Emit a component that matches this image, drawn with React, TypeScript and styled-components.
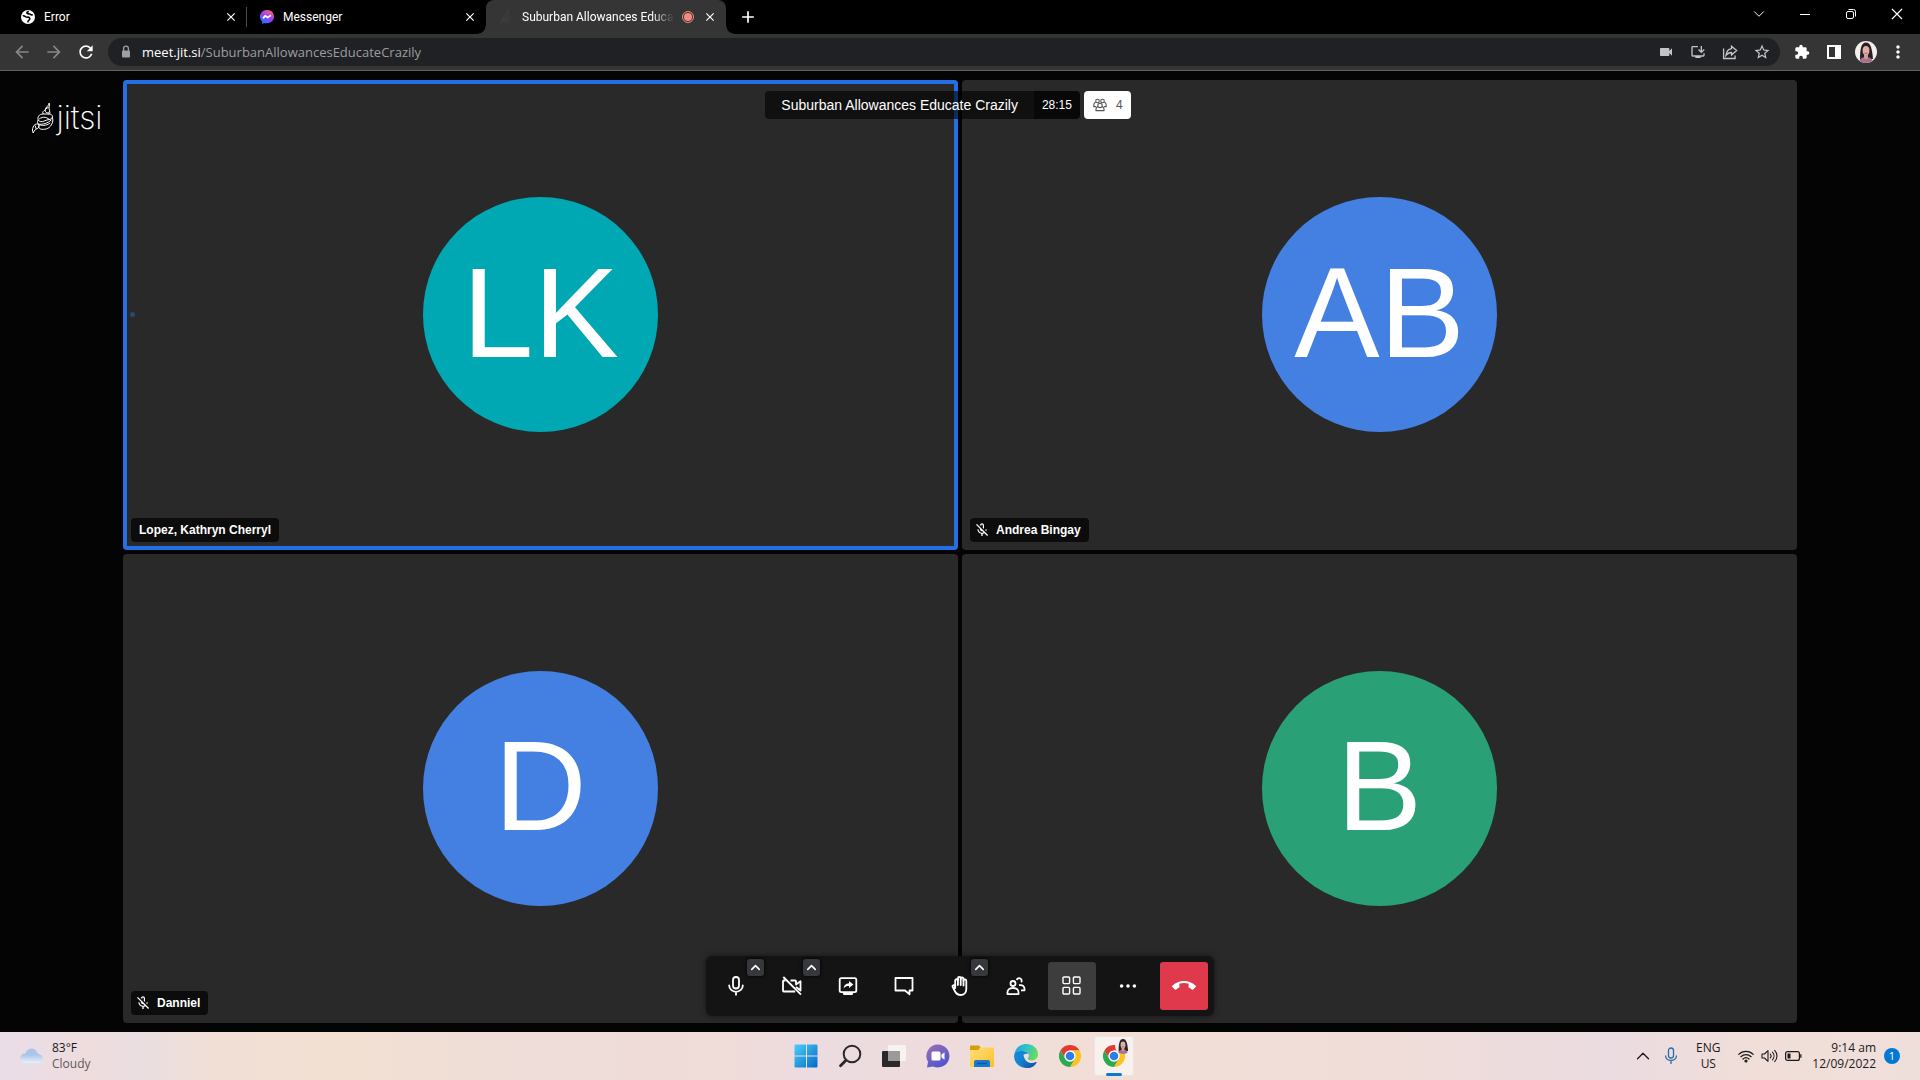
import React from 'react';
import styled, { createGlobalStyle, css } from 'styled-components';
import {
  MdAdd,
  MdArrowBack,
  MdArrowForward,
  MdCallEnd,
  MdClose,
  MdExtension,
  MdMoreVert,
  MdOutlineInstallDesktop,
  MdOutlineMicOff,
  MdRefresh,
  MdStarBorder,
  MdVideocam,
} from 'react-icons/md';
import { ChevronDown, ChevronUp } from 'lucide-react';

const systemFont = '"Open Sans", "Noto Sans", sans-serif';
const tabFont = 'Roboto, "Noto Sans", sans-serif';
const meetFont = '"Liberation Sans", Arial, sans-serif';

const GlobalStyle = createGlobalStyle`
  *, *::before, *::after { box-sizing: border-box; }
  body { margin: 0; background: #040404; }
  button, input { font: inherit; color: inherit; }
  button { padding: 0; border: 0; background: none; }
  svg { display: block; flex: none; }
  h1, h2, p { margin: 0; font: inherit; }
`;

const Screen = styled.div`
  display: flex;
  flex-direction: column;
  min-height: 100vh;
  font: 12px/16px ${systemFont};
  color: #fff;
`;

/* ---------- browser window ---------- */

const TabStrip = styled.header`
  display: flex;
  height: 34px;
  padding-left: 8px;
  background: #000;
`;

const Tab = styled.div<{ $active?: boolean; $divider?: boolean }>`
  position: relative;
  display: flex;
  align-items: center;
  gap: 8px;
  width: ${(p) => (p.$active ? '240px' : '239px')};
  padding: 0 8px 0 12px;
  border-radius: 8px 8px 0 0;
  font-family: ${tabFont};
  ${(p) =>
    p.$divider &&
    css`
      &::after {
        content: '';
        position: absolute;
        right: 0;
        width: 1px;
        height: 20px;
        background: #4a4a4a;
      }
    `}
  ${(p) =>
    p.$active &&
    css`
      background: #353535;
      &::before,
      &::after {
        content: '';
        position: absolute;
        bottom: 0;
        width: 8px;
        height: 8px;
      }
      &::before {
        right: 100%;
        background: radial-gradient(circle at 0 0, transparent 7px, #353535 8px);
      }
      &::after {
        left: 100%;
        background: radial-gradient(circle at 100% 0, transparent 7px, #353535 8px);
      }
    `}
`;

const TabTitle = styled.span<{ $fade?: boolean }>`
  flex: 1;
  min-width: 0;
  overflow: hidden;
  white-space: nowrap;
  ${(p) =>
    p.$fade &&
    css`
      mask-image: linear-gradient(90deg, #000 85%, transparent);
    `}
`;

const SmallButton = styled.button`
  display: grid;
  place-items: center;
  width: 16px;
  height: 16px;
`;

const NewTab = styled.button`
  display: grid;
  place-items: center;
  width: 28px;
  margin-left: 8px;
`;

const WindowControls = styled.div`
  display: flex;
  margin-left: auto;
`;

const WindowButton = styled.button`
  display: grid;
  place-items: center;
  width: 46px;
  height: 28px;
`;

const AddressBar = styled.nav`
  display: flex;
  align-items: center;
  gap: 4px;
  height: 37px;
  padding: 0 8px;
  background: #353535;
  border-bottom: 1px solid #616362;
`;

const IconButton = styled.button<{ $tone?: string }>`
  display: grid;
  place-items: center;
  width: 28px;
  height: 28px;
  color: ${(p) => p.$tone ?? '#fff'};
`;

const Omnibox = styled.form`
  display: flex;
  align-items: center;
  gap: 4px;
  flex: 1;
  height: 28px;
  margin: 0 4px;
  padding: 0 4px 0 10px;
  border-radius: 14px;
  background: #202124;
  color: #c2c4c6;
`;

const Address = styled.label`
  display: flex;
  flex: 1;
  padding-left: 4px;
  font-size: 13px;
  line-height: 20px;
  color: #fff;
`;

const AddressInput = styled.input`
  flex: 1;
  min-width: 0;
  padding: 0;
  border: 0;
  outline: 0;
  background: none;
  color: #9b9d9f;
`;

/* ---------- meeting ---------- */

const Stage = styled.main`
  position: relative;
  display: flex;
  flex: 1;
  padding: 9px 123px;
  background: #040404;
  font-family: ${meetFont};
`;

const Watermark = styled.a`
  position: absolute;
  top: 29px;
  left: 32px;
  display: flex;
  align-items: center;
  gap: 2px;
  color: #fff;
  text-decoration: none;
  font: 200 32px/36px Inter, ${meetFont};
`;

const TileGrid = styled.div`
  display: grid;
  flex: 1;
  grid-template: 1fr 1fr / 1fr 1fr;
  gap: 4px;
`;

const Tile = styled.section<{ $speaking?: boolean }>`
  position: relative;
  display: grid;
  place-items: center;
  border-radius: 4px;
  background: #292929;
  ${(p) =>
    p.$speaking &&
    css`
      box-shadow: inset 0 0 0 4px #246fe5;
    `}
`;

const Avatar = styled.div<{ $color: string }>`
  display: grid;
  place-items: center;
  height: 50%;
  aspect-ratio: 1;
  padding-bottom: 4px;
  border-radius: 50%;
  background: ${(p) => p.$color};
  font-size: 128px;
  line-height: 1;
`;

const NameTag = styled.h2<{ $muted: boolean }>`
  position: absolute;
  left: 8px;
  bottom: 8px;
  display: flex;
  align-items: center;
  gap: 6px;
  height: 24px;
  padding: 0 8px 0 ${(p) => (p.$muted ? '4px' : '8px')};
  border-radius: 4px;
  background: rgba(0, 0, 0, 0.7);
  font-size: 12px;
  font-weight: 700;
`;

const AudioDot = styled.span`
  position: absolute;
  left: 7px;
  width: 5px;
  height: 5px;
  border-radius: 50%;
  background: #2a486f;
`;

const MeetingInfo = styled.div`
  position: absolute;
  top: 20px;
  left: 0;
  right: 0;
  display: flex;
  justify-content: center;
  padding-right: 24px;
  line-height: 28px;
`;

const Subject = styled.h1`
  padding: 0 16px;
  border-radius: 4px 0 0 4px;
  background: rgba(0, 0, 0, 0.6);
  font-size: 14px;
`;

const Timer = styled.time`
  padding: 0 8px;
  border-radius: 0 4px 4px 0;
  background: rgba(0, 0, 0, 0.8);
  font-size: 12px;
`;

const Count = styled.button`
  display: flex;
  align-items: center;
  gap: 8px;
  height: 28px;
  margin-left: 4px;
  padding: 0 8px;
  border-radius: 4px;
  background: #fff;
  color: #555;
  font-size: 12px;
`;

const Toolbox = styled.div`
  position: absolute;
  left: 50%;
  bottom: 16px;
  display: flex;
  gap: 8px;
  padding: 6px;
  border-radius: 6px;
  background: #141414;
  box-shadow: 0 0 6px rgba(0, 0, 0, 0.5);
  transform: translateX(-50%);
`;

const ToolSlot = styled.div`
  position: relative;
`;

const ToolButton = styled.button<{ $fill?: string }>`
  display: grid;
  place-items: center;
  width: 48px;
  height: 48px;
  border-radius: 3px;
  background: ${(p) => p.$fill ?? 'transparent'};
`;

const ToolOptions = styled.button`
  position: absolute;
  top: -3px;
  right: -4px;
  display: grid;
  place-items: center;
  width: 17px;
  height: 17px;
  border-radius: 3px;
  background: #36383c;
  box-shadow: 0 0 4px #000;
`;

/* ---------- desktop taskbar ---------- */

const Taskbar = styled.footer`
  display: grid;
  grid-template-columns: 1fr auto 1fr;
  align-items: center;
  height: 48px;
  background: linear-gradient(90deg, #e9dde8 0%, #efdddd 5%, #e9dee1 7%, #f1dfd6 11%, #f2e0d2 18%, #eeddd9 28%, #f0dcd8 38%, #ecdbe0 42%, #eedcdc 50%, #f1dfd6 58%, #f0ddd9 72%, #ebdce1 84%, #f1ded8 92%, #efdfdb 100%);
  color: #1d1a1b;
`;

const Weather = styled.button`
  display: flex;
  align-items: center;
  gap: 8px;
  justify-self: start;
  padding-left: 20px;
  text-align: left;
`;

const Muted = styled.span`
  display: block;
  color: #5f595a;
`;

const Apps = styled.div`
  display: flex;
  gap: 4px;
`;

const AppButton = styled.button<{ $active?: boolean }>`
  position: relative;
  display: grid;
  place-items: center;
  width: 40px;
  height: 40px;
  border-radius: 4px;
  ${(p) =>
    p.$active &&
    css`
      background: #f8f1ed;
      box-shadow: inset 0 0 0 1px #eee4df;
      &::after {
        content: '';
        position: absolute;
        bottom: 0;
        width: 16px;
        height: 3px;
        border-radius: 2px;
        background: #0b78d4;
      }
    `}
`;

const AppBadge = styled.span`
  position: absolute;
  top: 2px;
  right: 3px;
`;

const Tray = styled.div`
  display: flex;
  align-items: center;
  justify-self: end;
  gap: 6px;
  padding-right: 20px;
`;

const TrayButton = styled.button`
  display: grid;
  place-items: center;
  width: 22px;
  height: 40px;
`;

const Language = styled.button`
  width: 40px;
  text-align: center;
`;

const Status = styled.button`
  display: flex;
  align-items: center;
  gap: 7px;
  height: 40px;
  padding: 0 4px;
`;

const Clock = styled.button`
  display: flex;
  flex-direction: column;
  align-items: flex-end;
`;

const Notice = styled.button`
  width: 16px;
  height: 16px;
  margin-left: 2px;
  border-radius: 50%;
  background: #0078d4;
  color: #fff;
  font-size: 11px;
  line-height: 16px;
`;

/* ---------- drawings ---------- */

const GlobeIcon = () => (
  <svg width="16" height="16" viewBox="0 0 16 16">
    <circle cx="8" cy="8" r="7" fill="#fff" />
    <path d="M2.800 6.800c2.400-.4 2.800 1.800 4.600 1.400 1.600-.3 2.600.6 2.400 1.800-.2 1.400-1.800 1-2 3.400M8.800 2.600c-1.400 0-2.600 1.200-1.400 2 1 .6 1.800-.2 2.800.6.8.8 1.600.8 2.600.6" fill="none" stroke="#000" strokeWidth="1.600" />
  </svg>
);

const MessengerIcon = () => (
  <svg width="16" height="16" viewBox="0 0 16 16">
    <defs>
      <linearGradient id="msg" x1="0.2" y1="1" x2="0.8" y2="0">
        <stop offset="0" stopColor="#0a84ff" />
        <stop offset="0.5" stopColor="#9a3bff" />
        <stop offset="1" stopColor="#ff6968" />
      </linearGradient>
    </defs>
    <path d="M8 1C4 1 1 3.900 1 7.600c0 2 .8 3.700 2.200 4.900V15l2-1.100c.9.3 1.800.4 2.800.4 4 0 7-2.900 7-6.700S12 1 8 1z" fill="url(#msg)" />
    <path d="M4 9.400 6.300 6.600 8.600 8.600 11.800 6.400" fill="none" stroke="#fff" strokeWidth="1.700" strokeLinejoin="round" />
  </svg>
);

const JitsiMark = ({ size, tone }: { size: number; tone: string }) => (
  <svg width={size * 0.7} height={size} viewBox="0 0 22 32" fill="none" stroke={tone} strokeWidth="1" strokeLinejoin="round">
    <path d="M17 1c0 3-4 4-4 7 0 2 1 3 3 3 1-1 2-2 1-4-1-1 1-3 0-6zM13.500 7l3-2" />
    <path d="M13 8c-2 1-3 2-2 4l6 0c1-1 1-2 0-3" />
    <path d="M11 12c-4 0-6 3-5 6 1 2 4 2 6 1 4-2 7-1 8-3 1-3-1-4-4-4" />
    <path d="M20 15c1 3 1 5-1 8-2 4-7 5-11 4M6 18c-1 2-1 3 0 4 4 1 10-1 13-4M6 22c3 2 8 2 12-1M7 17c4-3 8-2 12 2" />
    <path d="M6 22c-2 0-4 0-5 3-1 2-1 4 0 6 1-3 3-4 5-5 1-1 1-3 0-4zM8 27c-1-1-2-2-1-4M3 23.500l1 3.500" />
  </svg>
);

const RecordingIcon = () => (
  <svg width="12" height="12" viewBox="0 0 12 12">
    <circle cx="6" cy="6" r="5.500" fill="none" stroke="#f28b82" />
    <circle cx="6" cy="6" r="4" fill="#f28b82" />
  </svg>
);

const LockIcon = () => (
  <svg width="16" height="16" viewBox="0 0 16 16">
    <rect x="4" y="6.500" width="8" height="7" rx="1" fill="#9aa0a6" />
    <path d="M5.600 7V4.500a2.400 2.400 0 0 1 4.800 0V7" fill="none" stroke="#9aa0a6" strokeWidth="1.300" />
  </svg>
);

const ShareIcon = () => (
  <svg width="18" height="18" viewBox="0 0 18 18" fill="none" stroke="currentColor" strokeWidth="1.300">
    <path d="M2.600 5.500v10h11.500v-3" />
    <path d="M10.500 3.200 15.600 7.600 10.500 12V9.500C8 9.500 6.300 10.500 5 12.400 5.300 8.800 7.300 6.300 10.500 5.700z" />
  </svg>
);

const PanelIcon = () => (
  <svg width="14" height="14" viewBox="0 0 14 14">
    <path d="M0 0h14v14H0zM2 2v10h6V2z" fill="#fff" fillRule="evenodd" />
  </svg>
);

const Portrait = ({ size }: { size: number }) => (
  <svg width={size} height={size} viewBox="0 0 22 22">
    <defs>
      <clipPath id={`face${size}`}>
        <circle cx="11" cy="11" r="11" />
      </clipPath>
    </defs>
    <g clipPath={`url(#face${size})`}>
      <rect width="22" height="22" fill="#f4eeee" />
      <path d="M5 19C5 8 6 1.500 11 1.500S17 8 18 18z" fill="#2a2022" />
      <path d="M4 22c0-4 3-6 7-6s7 2 7 6z" fill="#a8718f" />
      <path d="M9 13h4v4l-2 1.500L9 17z" fill="#cf9c91" />
      <ellipse cx="11" cy="9.500" rx="3.400" ry="4.600" fill="#deb0a5" />
      <path d="M9.500 12q1.500 1 3 0" stroke="#a14d55" strokeWidth=".8" fill="none" />
    </g>
  </svg>
);

const RestoreIcon = () => (
  <svg width="12" height="12" viewBox="0 0 12 12" fill="none" stroke="#fff">
    <rect x="1.500" y="3.500" width="7" height="7" rx="1.500" />
    <path d="M3.500 1.500h5a2 2 0 0 1 2 2v5" />
  </svg>
);

const CloseWindowIcon = () => (
  <svg width="12" height="12" viewBox="0 0 12 12" stroke="#fff" strokeWidth="1.200">
    <path d="m1 1 10 10M11 1 1 11" />
  </svg>
);

const MinimizeIcon = () => (
  <svg width="10" height="10" viewBox="0 0 10 10">
    <path d="M0 5h10v1H0z" fill="#fff" />
  </svg>
);

const GroupIcon = () => (
  <svg width="16" height="16" viewBox="0 0 16 16" fill="none" stroke="currentColor" strokeWidth="1.100" strokeLinejoin="round">
    <circle cx="5.500" cy="4" r="1.800" />
    <circle cx="10.500" cy="4" r="1.800" />
    <path d="M5.800 8.400a2.200 2.200 0 0 1 4.400 0 2.200 2.200 0 0 1-4.400 0z" />
    <path d="M3.700 5.200C2 5.700 1.600 7 1.800 9.600h2.400M12.300 5.200c1.700.5 2.100 1.800 1.900 4.400h-2.400" />
    <path d="M5.800 9.500c-1.400.6-2 1.800-1.900 4.100h8.200c.1-2.300-.5-3.500-1.900-4.100" />
  </svg>
);

const MicIcon = () => (
  <svg width="24" height="24" viewBox="0 0 24 24" fill="none" stroke="#fff" strokeWidth="1.800" strokeLinecap="round">
    <rect x="9" y="3" width="6" height="11.500" rx="3" />
    <path d="M5.200 11.500a6.800 6.300 0 0 0 13.600 0M12 18v2.800" />
  </svg>
);

const CameraOffIcon = () => (
  <svg width="24" height="24" viewBox="0 0 24 24" fill="none" stroke="#fff" strokeWidth="1.800" strokeLinejoin="round">
    <path d="M5.500 6.500H3.800a.8.800 0 0 0-.8.800v9.400a.8.800 0 0 0 .8.800h11.400M10.500 6.500h4.700a.8.800 0 0 1 .8.800v3.200l4.500-3.200v9.200L16 13" />
    <path d="m3.300 3 17.700 17.700" />
  </svg>
);

const ScreenShareIcon = () => (
  <svg width="24" height="24" viewBox="0 0 24 24">
    <rect x="3.700" y="4.200" width="16.600" height="14" rx="1.600" fill="none" stroke="#fff" strokeWidth="1.800" />
    <path d="M6.500 18.500h11l-1 2.600h-9z" fill="#fff" />
    <path d="M13 7 17.400 10.600 13 14.100v-2.200c-2.300 0-3.900.6-5.400 2.500.3-3 2.100-4.800 5.400-5.100z" fill="#fff" />
  </svg>
);

const ChatIcon = () => (
  <svg width="24" height="24" viewBox="0 0 24 24" fill="none" stroke="#fff" strokeWidth="1.800" strokeLinejoin="round">
    <path d="M3.500 4h17v12.500h-3v3.800L13 16.500H3.500z" />
  </svg>
);

const HandIcon = () => (
  <svg width="24" height="24" viewBox="0 0 24 24" fill="none" stroke="#fff" strokeWidth="1.800" strokeLinecap="round" strokeLinejoin="round">
    <path d="M7.200 14V6.300a1.400 1.400 0 0 1 2.700 0V4.200a1.400 1.400 0 0 1 2.800 0v.7a1.400 1.400 0 0 1 2.800 0v1.800a1.400 1.400 0 0 1 2.800 0V15c0 3.600-2.400 6-5.500 6-3 0-4.800-1.500-6-4l-2.300-4.300c-.4-1.300 1.500-2 2.300-.8L7.200 14" />
    <path d="M9.900 5v6M12.700 5v6M15.500 6v5.500" />
  </svg>
);

const PeopleIcon = () => (
  <svg width="24" height="24" viewBox="0 0 24 24" fill="none" stroke="#fff" strokeWidth="1.800" strokeLinejoin="round">
    <circle cx="9" cy="9.500" r="2.500" />
    <path d="M3.500 20.200c-.5-4.300 1.500-6.200 5.500-6.200s6 1.900 5.500 6.200z" />
    <path d="M12.800 6a2.500 2.500 0 1 1 4.400 2.200M15 11.200c4-.8 5.900 1.300 5.500 5.100h-3.500" />
  </svg>
);

const TileViewIcon = () => (
  <svg width="24" height="24" viewBox="0 0 24 24" fill="none" stroke="#fff" strokeWidth="1.400">
    <rect x="3" y="3" width="6.600" height="6.600" rx="1" />
    <rect x="13.400" y="3" width="6.600" height="6.600" rx="1" />
    <rect x="3" y="13.400" width="6.600" height="6.600" rx="1" />
    <rect x="13.400" y="13.400" width="6.600" height="6.600" rx="1" />
  </svg>
);

const DotsIcon = () => (
  <svg width="24" height="24" viewBox="0 0 24 24" fill="#fff">
    <circle cx="5.600" cy="12" r="1.800" />
    <circle cx="12" cy="12" r="1.800" />
    <circle cx="18.400" cy="12" r="1.800" />
  </svg>
);

const CloudIcon = () => (
  <svg width="24" height="16" viewBox="0 0 24 16">
    <defs>
      <linearGradient id="cloud" x1="0" y1="0" x2="0" y2="1">
        <stop offset="0" stopColor="#9fc0ea" />
        <stop offset="1" stopColor="#e9f1f8" />
      </linearGradient>
    </defs>
    <circle cx="11.500" cy="6.500" r="6" fill="#a9c5ea" />
    <path d="M5 15a4.800 4.800 0 1 1 2-9.200c2 .6 3 1.600 4 3.200a6 6 0 0 1 8.500-2.800A4.600 4.600 0 0 1 19.300 15z" fill="url(#cloud)" />
  </svg>
);

const StartIcon = () => (
  <svg width="24" height="24" viewBox="0 0 24 24">
    <defs>
      <linearGradient id="start" gradientUnits="userSpaceOnUse" x1="0" y1="0" x2="24" y2="24">
        <stop offset="0" stopColor="#4fd0fb" />
        <stop offset="1" stopColor="#0067c4" />
      </linearGradient>
    </defs>
    <path d="M1.500 .5H12v11H.5v-10a1 1 0 0 1 1-1zM13 .5h9.500a1 1 0 0 1 1 1v10H13zM.5 12.500H12v11H1.500a1 1 0 0 1-1-1zM13 12.500h10.500v10a1 1 0 0 1-1 1H13z" fill="url(#start)" />
  </svg>
);

const SearchIcon = () => (
  <svg width="24" height="24" viewBox="0 0 24 24" fill="none" stroke="#2b2829" strokeLinecap="round">
    <circle cx="14" cy="10" r="8.300" strokeWidth="2" />
    <path d="m8 16.200-5.500 5.600" strokeWidth="2.800" />
  </svg>
);

const TaskViewIcon = () => (
  <svg width="24" height="24" viewBox="0 0 24 24">
    <rect x="0" y="7" width="18" height="16" rx="1" fill="#2b2a2a" />
    <rect x="6" y="1" width="18" height="16" rx="1" fill="#f7f5f5" opacity=".9" />
    <path d="M6 7h12v10H6z" fill="#9b9999" />
  </svg>
);

const TeamsIcon = () => (
  <svg width="24" height="24" viewBox="0 0 24 24">
    <defs>
      <linearGradient id="teams" x1="0" y1="0" x2="0.600" y2="1">
        <stop offset="0" stopColor="#a06fb2" />
        <stop offset="1" stopColor="#4f56cf" />
      </linearGradient>
    </defs>
    <path d="M12 .5a11.500 11.500 0 1 1-5 21.900L1 23.500l1-5.700A11.500 11.500 0 0 1 12 .5z" fill="url(#teams)" />
    <rect x="5.500" y="7.500" width="9" height="9" rx="1.500" fill="#fff" />
    <path d="m15.500 10.500 3-2.300v7.600l-3-2.300z" fill="#fff" />
  </svg>
);

const FolderIcon = () => (
  <svg width="24" height="24" viewBox="0 0 24 24">
    <defs>
      <linearGradient id="folder" x1="0" y1="0" x2="1" y2="1">
        <stop offset="0" stopColor="#ffe07a" />
        <stop offset="1" stopColor="#fbbf25" />
      </linearGradient>
    </defs>
    <path d="M0 2.500a1 1 0 0 1 1-1h8l2 2.500-2 3H0z" fill="#d99a0b" />
    <path d="M0 6h8l2.500-2.500H23a1 1 0 0 1 1 1V22a1 1 0 0 1-1 1H1a1 1 0 0 1-1-1z" fill="url(#folder)" />
    <path d="M4 23v-5a2 2 0 0 1 2-2h12a2 2 0 0 1 2 2v5z" fill="#1779cf" />
    <path d="M7 19.500h10" stroke="#0b57a4" strokeWidth="1.500" />
  </svg>
);

const EdgeIcon = () => (
  <svg width="24" height="24" viewBox="0 0 24 24">
    <defs>
      <linearGradient id="edgeTop" x1="0" y1="0.200" x2="1" y2="0.500">
        <stop offset="0" stopColor="#1e9fe0" />
        <stop offset="0.500" stopColor="#2fc5c8" />
        <stop offset="1" stopColor="#6fdc55" />
      </linearGradient>
      <linearGradient id="edgeLow" x1="0" y1="0" x2="1" y2="1">
        <stop offset="0" stopColor="#1b8ddd" />
        <stop offset="1" stopColor="#0c4f9e" />
      </linearGradient>
    </defs>
    <path d="M.2 11C1 4.500 6 0 12.200 0 19 0 24 4.800 24 10.300c0 3.900-2.800 6.200-6 6.200-3 0-4.300-1.300-4.300-2 0-.6 1.200-1.100 1.200-3C14.900 9 12.500 7 9 7 5 7 1.800 9 .2 11z" fill="url(#edgeTop)" />
    <path d="M.2 11C1.500 8 5 6.800 8.500 7c3 .1 5 1.200 6 3-4-1.200-6.800 1.500-6.500 5.500.3 4.500 4.500 7.800 9 6.500l-2 1.700c-1 .3-2 .3-3 .3C5 24-.6 18 .2 11z" fill="#1583d6" />
    <path d="M9.500 10.700c-4 3-4.500 8.300-.5 11.800 2.500 2 7.500 2 10.500-.3 1.400-1.100 2.500-2.300 3.200-3.700.2-.5-.3-.7-.7-.5-5 2.500-11.500.5-12.500-7.300z" fill="url(#edgeLow)" />
  </svg>
);

const chromeBlade = 'M24 12h20.800A24 24 0 0 0 3.200 12l10.400 18A12 12 0 0 1 24 12z';

const ChromeIcon = () => (
  <svg width="22" height="22" viewBox="0 0 48 48">
    <path d={chromeBlade} fill="#e33b2e" />
    <path d={chromeBlade} fill="#fcc31e" transform="rotate(120 24 24)" />
    <path d={chromeBlade} fill="#2da94f" transform="rotate(240 24 24)" />
    <circle cx="24" cy="24" r="12" fill="#fff" />
    <circle cx="24" cy="24" r="9.400" fill="#2f7de9" />
  </svg>
);

const TrayMicIcon = () => (
  <svg width="14" height="18" viewBox="0 0 14 18" fill="none" stroke="#2b6cab" strokeWidth="1.300">
    <rect x="4.500" y="1" width="5" height="10" rx="2.500" />
    <path d="M1.500 8.500c0 6.500 11 6.500 11 0M7 13.500V17" />
  </svg>
);

const WifiIcon = () => (
  <svg width="16" height="16" viewBox="0 0 16 16" fill="none" stroke="#1d1a1b" strokeWidth="1.200" strokeLinecap="round">
    <path d="M.8 6.400c4-4 10.400-4 14.400 0M2.900 8.700c2.900-2.800 7.300-2.800 10.200 0M5 11c1.700-1.600 4.300-1.600 6 0" />
    <circle cx="8" cy="13" r="1" fill="#1d1a1b" />
  </svg>
);

const VolumeIcon = () => (
  <svg width="17" height="16" viewBox="0 0 17 16" fill="none" stroke="#1d1a1b" strokeWidth="1.100" strokeLinecap="round" strokeLinejoin="round">
    <path d="M1 6h2.500L7 2.700v10.600L3.500 10H1zM9.300 6c1 1.200 1 2.800 0 4M11.500 4.200c2 2.200 2 5.400 0 7.600M13.700 2.400c3 3.200 3 8 0 11.200" />
  </svg>
);

const BatteryIcon = () => (
  <svg width="17" height="12" viewBox="0 0 17 12">
    <rect x=".6" y="1.600" width="13.800" height="8.800" rx="2" fill="none" stroke="#1d1a1b" strokeWidth="1.200" />
    <path d="M2.500 3.500h3v5h-3zM15.200 4.200h1.300v3.600h-1.300z" fill="#1d1a1b" />
  </svg>
);

/* ---------- data ---------- */

const participants = [
  { initials: 'LK', name: 'Lopez, Kathryn Cherryl', color: '#00a8b3', muted: false, speaking: true, tag: true },
  { initials: 'AB', name: 'Andrea Bingay', color: '#4380e2', muted: true, speaking: false, tag: true },
  { initials: 'D', name: 'Danniel', color: '#4380e2', muted: true, speaking: false, tag: true },
  { initials: 'B', name: 'B', color: '#2aa076', muted: false, speaking: false, tag: false },
];

const tools = [
  { label: 'Mute microphone', icon: <MicIcon />, options: 'Audio settings' },
  { label: 'Start camera', icon: <CameraOffIcon />, options: 'Video settings' },
  { label: 'Share screen', icon: <ScreenShareIcon /> },
  { label: 'Open chat', icon: <ChatIcon /> },
  { label: 'Raise hand', icon: <HandIcon />, options: 'Reactions' },
  { label: 'Participants', icon: <PeopleIcon /> },
  { label: 'Toggle tile view', icon: <TileViewIcon />, fill: '#3d3d3d' },
  { label: 'More actions', icon: <DotsIcon /> },
  { label: 'Leave the meeting', icon: <MdCallEnd size={24} />, fill: '#e0394b' },
];

const apps = [
  { label: 'Start', icon: <StartIcon /> },
  { label: 'Search', icon: <SearchIcon /> },
  { label: 'Task view', icon: <TaskViewIcon /> },
  { label: 'Chat', icon: <TeamsIcon /> },
  { label: 'File Explorer', icon: <FolderIcon /> },
  { label: 'Microsoft Edge', icon: <EdgeIcon /> },
  { label: 'Google Chrome', icon: <ChromeIcon /> },
];

export default function App() {
  return (
    <Screen>
      <GlobalStyle />
      <TabStrip>
        <Tab $divider>
          <GlobeIcon />
          <TabTitle>Error</TabTitle>
          <SmallButton aria-label="Close tab"><MdClose size={14} /></SmallButton>
        </Tab>
        <Tab>
          <MessengerIcon />
          <TabTitle>Messenger</TabTitle>
          <SmallButton aria-label="Close tab"><MdClose size={14} /></SmallButton>
        </Tab>
        <Tab $active>
          <SmallButton as="span"><JitsiMark size={16} tone="#454545" /></SmallButton>
          <TabTitle $fade>Suburban Allowances Educate Crazily</TabTitle>
          <RecordingIcon />
          <SmallButton aria-label="Close tab"><MdClose size={14} /></SmallButton>
        </Tab>
        <NewTab aria-label="New tab"><MdAdd size={20} /></NewTab>
        <WindowControls>
          <WindowButton aria-label="Search tabs"><ChevronDown size={18} strokeWidth={1.3} /></WindowButton>
          <WindowButton aria-label="Minimize"><MinimizeIcon /></WindowButton>
          <WindowButton aria-label="Restore"><RestoreIcon /></WindowButton>
          <WindowButton aria-label="Close"><CloseWindowIcon /></WindowButton>
        </WindowControls>
      </TabStrip>

      <AddressBar>
        <IconButton aria-label="Back" $tone="#878787"><MdArrowBack size={20} /></IconButton>
        <IconButton aria-label="Forward" $tone="#878787"><MdArrowForward size={20} /></IconButton>
        <IconButton aria-label="Reload"><MdRefresh size={20} /></IconButton>
        <Omnibox>
          <LockIcon />
          <Address>
            meet.jit.si
            <AddressInput type="text" defaultValue="/SuburbanAllowancesEducateCrazily" />
          </Address>
          <IconButton type="button" aria-label="Camera in use" $tone="#c2c4c6"><MdVideocam size={16} /></IconButton>
          <IconButton type="button" aria-label="Install" $tone="#c2c4c6"><MdOutlineInstallDesktop size={16} /></IconButton>
          <IconButton type="button" aria-label="Share" $tone="#c2c4c6"><ShareIcon /></IconButton>
          <IconButton type="button" aria-label="Bookmark" $tone="#c2c4c6"><MdStarBorder size={18} /></IconButton>
        </Omnibox>
        <IconButton aria-label="Extensions"><MdExtension size={16} /></IconButton>
        <IconButton aria-label="Side panel"><PanelIcon /></IconButton>
        <IconButton aria-label="Profile"><Portrait size={22} /></IconButton>
        <IconButton aria-label="Menu"><MdMoreVert size={20} /></IconButton>
      </AddressBar>

      <Stage>
        <TileGrid>
          {participants.map((p) => (
            <Tile key={p.name} $speaking={p.speaking} aria-label={p.name}>
              <Avatar $color={p.color}>{p.initials}</Avatar>
              {p.speaking && <AudioDot />}
              {p.tag && (
                <NameTag $muted={p.muted}>
                  {p.muted && <MdOutlineMicOff size={16} />}
                  {p.name}
                </NameTag>
              )}
            </Tile>
          ))}
        </TileGrid>
        <Watermark href="#jitsi">
          <JitsiMark size={32} tone="#fff" />
          jitsi
        </Watermark>
        <MeetingInfo>
          <Subject>Suburban Allowances Educate Crazily</Subject>
          <Timer>28:15</Timer>
          <Count aria-label="Participants: 4"><GroupIcon />4</Count>
        </MeetingInfo>
        <Toolbox role="toolbar">
          {tools.map((t) => (
            <ToolSlot key={t.label}>
              <ToolButton aria-label={t.label} $fill={t.fill}>{t.icon}</ToolButton>
              {t.options && (
                <ToolOptions aria-label={t.options}><ChevronUp size={15} strokeWidth={2.5} /></ToolOptions>
              )}
            </ToolSlot>
          ))}
        </Toolbox>
      </Stage>

      <Taskbar>
        <Weather>
          <CloudIcon />
          <span>83°F<Muted>Cloudy</Muted></span>
        </Weather>
        <Apps>
          {apps.map((a) => (
            <AppButton key={a.label} aria-label={a.label}>{a.icon}</AppButton>
          ))}
          <AppButton $active aria-label="Google Chrome, meeting window">
            <ChromeIcon />
            <AppBadge><Portrait size={16} /></AppBadge>
          </AppButton>
        </Apps>
        <Tray>
          <TrayButton aria-label="Show hidden icons"><ChevronUp size={22} strokeWidth={1.4} /></TrayButton>
          <TrayButton aria-label="Microphone in use"><TrayMicIcon /></TrayButton>
          <Language>ENG<br />US</Language>
          <Status aria-label="Network, volume and battery"><WifiIcon /><VolumeIcon /><BatteryIcon /></Status>
          <Clock><span>9:14 am</span><span>12/09/2022</span></Clock>
          <Notice aria-label="1 notification">1</Notice>
        </Tray>
      </Taskbar>
    </Screen>
  );
}
